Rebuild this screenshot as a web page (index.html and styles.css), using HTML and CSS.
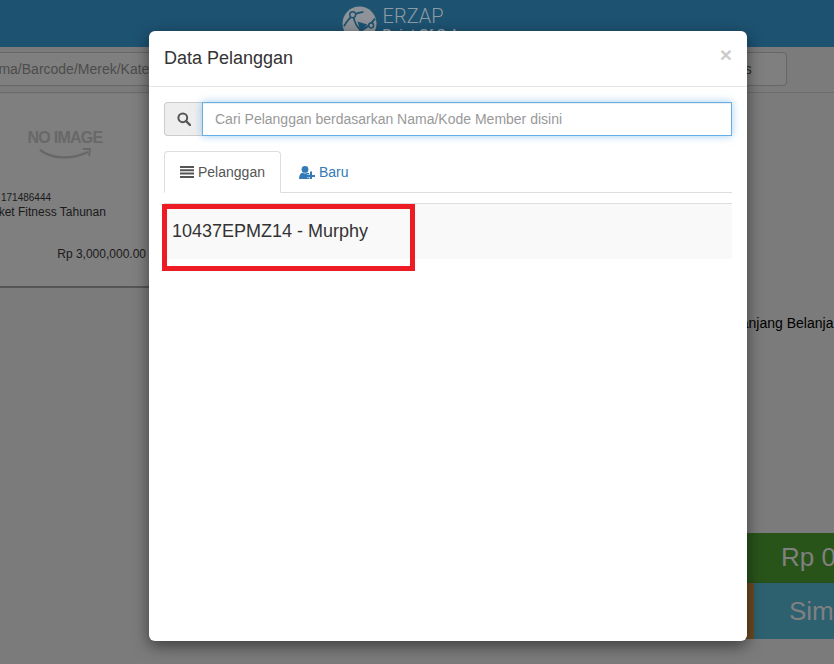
FILE: index.html
```html
<!DOCTYPE html>
<html lang="id">
<head>
<meta charset="utf-8">
<title>Data Pelanggan</title>
<link rel="stylesheet" href="styles.css">
</head>
<body>
<div class="app">
  <header class="topbar">
    <svg class="logo-mark" width="35" height="35" viewBox="0 0 36 36" aria-hidden="true">
      <circle cx="18" cy="18" r="17.500" fill="#8d9398"/>
      <path d="M2 21C8 10 14 7 22 6M7 30C14 29 26 24 34 13M12 12C14 22 22 30 30 29" fill="none" stroke="#1d5271" stroke-width="1.800"/>
      <path d="M16 16l10 3-7 8z" fill="#1d5271"/>
      <circle cx="11" cy="9" r="3" fill="#8d9398" stroke="#1d5271" stroke-width="1.500"/>
      <circle cx="30" cy="20" r="2.500" fill="#8d9398" stroke="#1d5271" stroke-width="1.500"/>
    </svg>
    <div class="brand">
      <div class="brand-name">ERZAP</div>
      <div class="brand-sub">Point Of Sale</div>
    </div>
  </header>
  <section class="toolbar">
    <div class="fake-input product-search">Cari Produk berdasarkan Nama/Barcode/Merek/Kategori</div>
    <div class="fake-input customer-pick">Pelanggan s</div>
  </section>
  <main class="workspace">
    <section class="products">
      <article class="product-card">
        <div class="no-image">
          <span class="no-image-text">NO IMAGE</span>
          <svg width="54" height="14" viewBox="0 0 54 14" aria-hidden="true">
            <path d="M1 2C13 11 32 12 49 4" fill="none" stroke="#676767" stroke-width="2.200"/>
            <path d="M44 1l7 0-1 7" fill="none" stroke="#676767" stroke-width="1.800"/>
          </svg>
        </div>
        <div class="sku">171486444</div>
        <div class="product-name">Paket Fitness Tahunan</div>
        <div class="price">Rp 3,000,000.00</div>
      </article>
    </section>
    <aside class="cart">
      <div class="cart-title">Keranjang Belanja</div>
      <div class="total">Rp 0</div>
      <div class="actions">
        <div class="action-hold"></div>
        <div class="action-save">Simpan</div>
      </div>
    </aside>
  </main>
</div>

<div class="modal" role="dialog" aria-label="Data Pelanggan">
  <div class="modal-header">
    <h4 class="modal-title">Data Pelanggan</h4>
    <span class="close">×</span>
  </div>
  <div class="modal-body">
    <div class="input-group">
      <span class="addon">
        <svg width="14" height="14" viewBox="0 0 14 14" aria-hidden="true">
          <circle cx="5.800" cy="5.800" r="4.400" fill="none" stroke="#555" stroke-width="2"/>
          <path d="M9 9l4 4" stroke="#555" stroke-width="2.400" stroke-linecap="round"/>
        </svg>
      </span>
      <input class="search" type="text" placeholder="Cari Pelanggan berdasarkan Nama/Kode Member disini">
    </div>
    <nav class="tabs">
      <a class="tab tab-active">
        <svg width="14" height="12" viewBox="0 0 14 12" aria-hidden="true">
          <path d="M0 0h14v2H0zM0 3.300h14v2H0zM0 6.600h14v2H0zM0 9.900h14V12H0z" fill="#555"/>
        </svg>
        Pelanggan
      </a>
      <a class="tab tab-link">
        <svg width="16" height="13" viewBox="0 0 16 13" aria-hidden="true">
          <circle cx="6" cy="3.400" r="3.400" fill="#337ab7"/>
          <path d="M0 13c0-4 1.500-6 3.500-6.300 1.500 1 3.500 1 5 0 .8.100 1.500.5 2 1.100V8.500H8v3h2.500V13z" fill="#337ab7"/>
          <path d="M11 5.500h2V9h3v2h-3v2h-2v-2H8V9h3z" fill="#337ab7"/>
        </svg>
        Baru
      </a>
    </nav>
    <div class="list">
      <div class="list-item">10437EPMZ14 - Murphy</div>
      <div class="highlight"></div>
    </div>
  </div>
</div>
</body>
</html>
```

FILE: styles.css
```css
* { box-sizing: border-box; }

html, body {
  margin: 0;
  height: 100%;
  overflow: hidden;
}

body {
  background: #7b7b7b;
  color: #1a1a1a;
  font-family: "Liberation Sans", Arial, sans-serif;
  font-size: 14px;
}

.app {
  width: 834px;
  height: 664px;
  overflow: hidden;
}

.topbar {
  height: 47px;
  background: #1d5271;
  display: flex;
  justify-content: center;
  align-items: flex-start;
  gap: 6px;
  padding: 6px 29px 0 0;
}

.logo-mark { flex: none; }

.brand { color: #8e9ba4; }

.brand-name {
  font-family: Roboto, sans-serif;
  font-weight: 300;
  font-size: 20px;
  line-height: 20px;
}

.brand-sub {
  font-weight: bold;
  font-size: 13px;
  line-height: 15px;
  white-space: nowrap;
}

.toolbar {
  height: 46px;
  margin-left: -192px;
  padding: 5px 47px 0 0;
  border-bottom: 1px solid #6c6c6c;
  display: flex;
  gap: 12px;
}

.fake-input {
  height: 34px;
  border: 1px solid #666;
  border-radius: 4px;
  background: #7f7f7f;
  font-size: 14px;
  line-height: 32px;
  white-space: nowrap;
  overflow: hidden;
}

.product-search {
  flex: 1;
  padding-left: 12px;
  color: #4c4c4c;
}

.customer-pick {
  flex: none;
  width: 160px;
  padding-left: 46px;
  color: #2a2a2a;
}

.workspace {
  margin-left: -20px;
  height: 546px;
  display: flex;
}

.products { flex: none; width: 620px; padding-top: 1px; }

.product-card {
  width: 170px;
  height: 194px;
  background: #7f7f7f;
  border-bottom: 2px solid #555;
  padding-top: 35px;
  font-size: 12px;
}

.no-image {
  height: 47px;
  margin-left: 45px;
  width: 80px;
  display: flex;
  flex-direction: column;
  align-items: center;
}

.no-image-text {
  font-size: 16px;
  font-weight: bold;
  line-height: 18px;
  letter-spacing: -.75px;
  color: #686868;
  white-space: nowrap;
}

.no-image svg { margin: 1px 0 0 1px; }

.sku {
  margin: 16px 0 0 21px;
  font-size: 10px;
  line-height: 12px;
}

.product-name {
  margin: 0 0 0 4px;
  line-height: 16px;
}

.price {
  margin-top: 26px;
  padding-right: 4px;
  text-align: right;
  line-height: 16px;
}

.cart {
  flex: 1;
  min-width: 0;
  display: flex;
  flex-direction: column;
  overflow: hidden;
}

.cart-title {
  margin-top: 222px;
  margin-left: 119px;
  font-size: 14px;
  line-height: 16px;
  color: #000;
  white-space: nowrap;
}

.total {
  margin-top: auto;
  height: 50px;
  background: #28541a;
  border-bottom: 1px solid #264f19;
  color: #808080;
  font-size: 26px;
  line-height: 48px;
  padding-left: 181px;
  white-space: nowrap;
}

.actions {
  display: flex;
  height: 56px;
}

.action-hold {
  flex: none;
  width: 154px;
  background: #6b4a22;
}

.action-save {
  flex: 1;
  min-width: 0;
  background: #2e6170;
  color: #808080;
  font-size: 26px;
  line-height: 56px;
  padding-left: 35px;
  white-space: nowrap;
  overflow: hidden;
}

.modal {
  position: absolute;
  left: 149px;
  top: 31px;
  width: 598px;
  height: 610px;
  background: #fff;
  border-radius: 6px;
  box-shadow: 0 5px 15px rgba(0, 0, 0, .5);
}

.modal-header {
  height: 56px;
  border-bottom: 1px solid #e5e5e5;
  padding: 0 15px;
  display: flex;
  justify-content: space-between;
}

.modal-title {
  margin: 17px 0 0;
  font-size: 18px;
  font-weight: normal;
  line-height: 20px;
  color: #333;
}

.close {
  margin: 12px 0 0;
  font-size: 21px;
  font-weight: bold;
  line-height: 23px;
  color: #ccc;
}

.modal-body { padding: 15px; }

.input-group {
  display: flex;
  height: 34px;
}

.addon {
  width: 38px;
  flex: none;
  background: #eee;
  border: 1px solid #ccc;
  border-right: 0;
  border-radius: 4px 0 0 4px;
  display: flex;
  align-items: center;
  justify-content: center;
}

.search {
  flex: 1;
  min-width: 0;
  height: 34px;
  border: 1px solid #66afe9;
  padding: 6px 12px;
  font: 14px "Liberation Sans", Arial, sans-serif;
  color: #555;
  outline: 0;
  box-shadow: inset 0 1px 1px rgba(0, 0, 0, .075), 0 0 8px rgba(102, 175, 233, .6);
}

.search::placeholder { color: #999; opacity: 1; }

.tabs {
  margin-top: 15px;
  height: 42px;
  border-bottom: 1px solid #ddd;
  display: flex;
}

.tab {
  height: 42px;
  padding: 0 15px;
  border: 1px solid transparent;
  border-radius: 4px 4px 0 0;
  display: flex;
  align-items: center;
  gap: 4px;
  font-size: 14px;
  line-height: 20px;
}

.tab-active {
  color: #555;
  background: #fff;
  border-color: #ddd #ddd #fff;
}

.tab-link {
  color: #337ab7;
  margin-left: 2px;
}

.list {
  position: relative;
  margin-top: 10px;
  border-top: 1px solid #ddd;
}

.list-item {
  height: 55px;
  padding: 0 8px;
  display: flex;
  align-items: center;
  background: #f9f9f9;
  font-size: 18px;
  color: #333;
}

.highlight {
  position: absolute;
  left: -2px;
  top: 0;
  width: 253px;
  height: 67px;
  border: 5px solid #ed1c24;
}
```
